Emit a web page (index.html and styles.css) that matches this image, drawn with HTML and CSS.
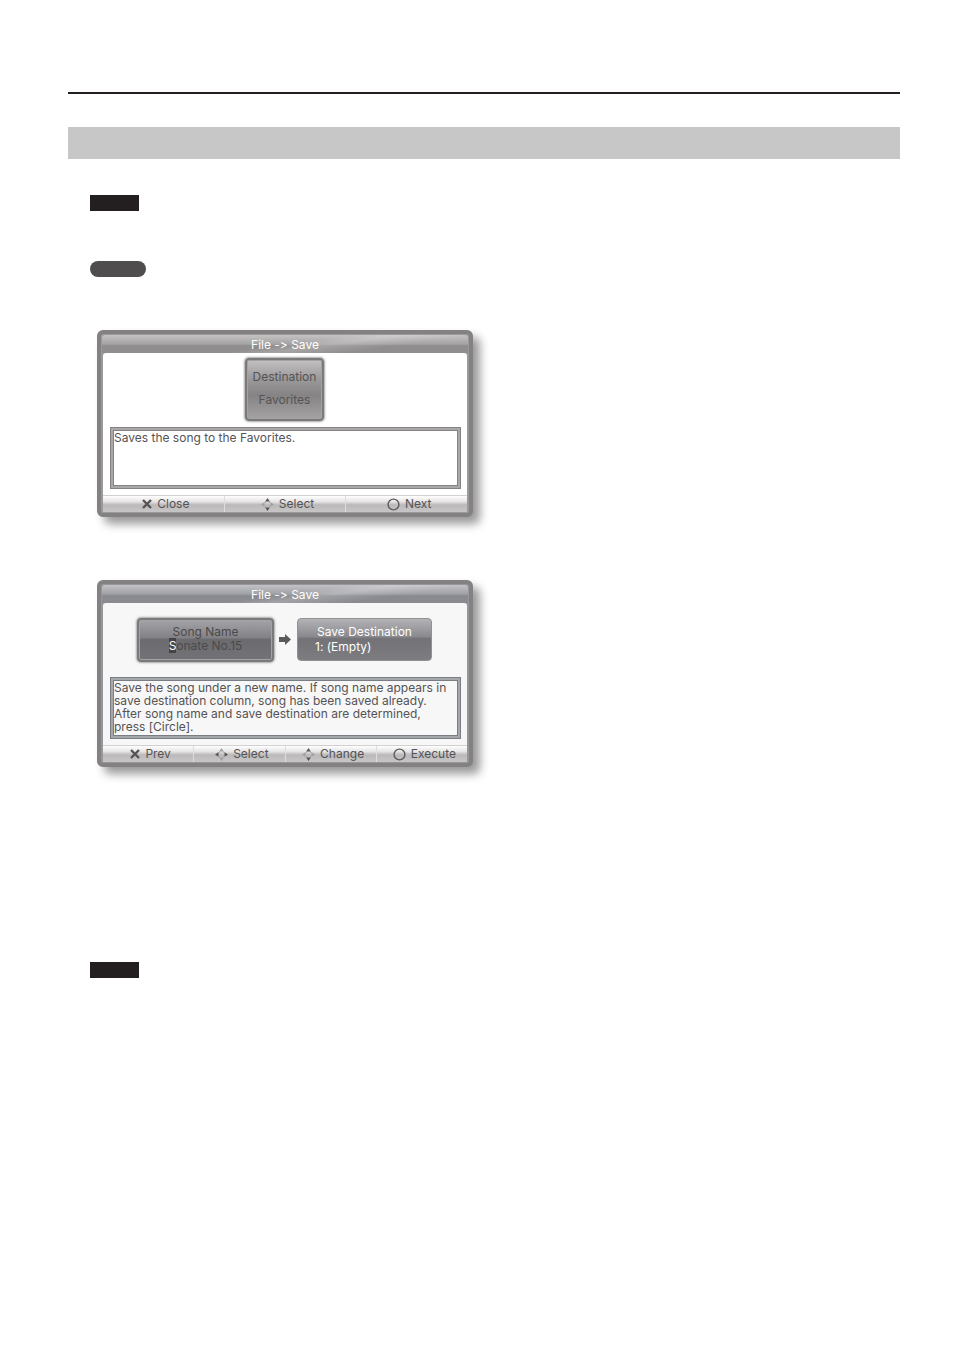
FILE: index.html
```
<!DOCTYPE html>
<html lang="en">
<head>
  <meta charset="UTF-8">
  <meta name="viewport" content="width=device-width, initial-scale=1">
  <title>File -&gt; Save</title>
  <link rel="stylesheet" href="styles.css">
</head>
<body>

  <!-- shared icons for the button bars -->
  <svg class="sprite" aria-hidden="true">
    <symbol id="cross" viewBox="0 0 10 10">
      <path d="M1 1L9 9M9 1L1 9" fill="none" stroke="#555354" stroke-width="2.4"/>
    </symbol>
    <symbol id="circle" viewBox="0 0 12 12">
      <circle cx="6" cy="6" r="5" fill="none" stroke="#5d5b5c" stroke-width="1.3"/>
    </symbol>
    <symbol id="vertical" viewBox="0 0 13 13">
      <path d="M0 6.5L3.5 4.2V8.8ZM13 6.5L9.5 4.2V8.8Z" fill="#a2a0a1"/>
      <path d="M4 5V4H5M8 4H9V5M9 8V9H8M5 9H4V8" fill="none" stroke="#a9a7a8"/>
      <path d="M6.5 0L8.8 3.5H4.2ZM6.5 13L8.8 9.5H4.2Z" fill="#555354"/>
    </symbol>
    <symbol id="horizontal" viewBox="0 0 13 13">
      <path d="M6.5 0L8.8 3.5H4.2ZM6.5 13L8.8 9.5H4.2Z" fill="#a2a0a1"/>
      <path d="M4 5V4H5M8 4H9V5M9 8V9H8M5 9H4V8" fill="none" stroke="#a9a7a8"/>
      <path d="M0 6.5L3.5 4.2V8.8ZM13 6.5L9.5 4.2V8.8Z" fill="#555354"/>
    </symbol>
  </svg>

  <header>
    <div class="title-band"></div>
  </header>

  <main>
    <div class="tag"></div>
    <div class="pill"></div>

    <section class="screen">
      <h2>File -&gt; Save</h2>
      <div class="content">
        <div class="choices">
          <button class="tile destination selected"><span>Destination</span><span>Favorites</span></button>
        </div>
        <p class="help">Saves the song to the Favorites.</p>
      </div>
      <div class="keys">
        <button><svg class="small"><use href="#cross"/></svg>Close</button>
        <button><svg><use href="#vertical"/></svg>Select</button>
        <button><svg><use href="#circle"/></svg>Next</button>
      </div>
    </section>

    <section class="screen cool">
      <h2>File -&gt; Save</h2>
      <div class="content">
        <div class="choices">
          <button class="tile song selected"><span>Song Name</span><span><mark>S</mark>onate No.15</span></button>
          <svg class="arrow" viewBox="0 0 12 11" aria-hidden="true">
            <path d="M0 3H6V0L12 5.5L6 11V8H0Z" fill="#5b595a"/>
          </svg>
          <button class="tile save"><span>Save Destination</span><span class="slot">1: (Empty)</span></button>
        </div>
        <p class="help">Save the song under a new name. If song name appears in<br>
          save destination column, song has been saved already.<br>
          After song name and save destination are determined,<br>
          press [Circle].</p>
      </div>
      <div class="keys">
        <button><svg class="small"><use href="#cross"/></svg>Prev</button>
        <button><svg><use href="#horizontal"/></svg>Select</button>
        <button><svg><use href="#vertical"/></svg>Change</button>
        <button><svg><use href="#circle"/></svg>Execute</button>
      </div>
    </section>

    <div class="tag last"></div>
  </main>

</body>
</html>
```
FILE: styles.css
```
* {
  box-sizing: border-box;
}

body {
  margin: 0;
  padding: 92px 54px 100px 68px;
  background: #fff;
  color: #555354;
  font: 12px/12px Inter, "Liberation Sans", sans-serif;
  font-variant-ligatures: none;
}

.sprite {
  position: absolute;
  width: 0;
  height: 0;
}

header {
  border-top: 2px solid #231f20;
  padding-top: 33px;
}

.title-band {
  height: 32px;
  background: #c7c7c7;
}

main {
  padding: 36px 22px 0;
}

.tag {
  width: 49px;
  height: 16px;
  background: #231f20;
}

.last {
  margin-top: 195px;
}

.pill {
  width: 56px;
  height: 16px;
  margin: 50px 0 53px;
  border-radius: 8px;
  background: #4f4d4e;
}

/* device screens */
.screen {
  max-width: 376px;
  margin: 0 0 63px 7px;
  padding: 1px;
  border: 4px solid #838182;
  border-radius: 6px;
  background: #9b999a;
  box-shadow: 7px 7px 10px rgba(0, 0, 0, 0.4);
}

.screen h2 {
  height: 18px;
  margin: 0;
  padding-top: 4px;
  border-radius: 3px 3px 0 0;
  background:
    linear-gradient(172deg, transparent 50%, rgba(255,255,255,0.2) 60%, transparent 75%),
    linear-gradient(#c5c3c4, #a5a3a4 50%, #8f8d8e 60%, #908e8f);
  color: #fff;
  font-size: 12px;
  font-weight: 400;
  text-align: center;
}

.content {
  height: 142px;
  margin: 0 1px;
  padding: 4px 6px 0 7px;
  border-radius: 3px 3px 0 0;
  background: #fff;
}

.choices {
  display: flex;
  justify-content: center;
  align-items: center;
  height: 65px;
  padding-right: 2px;
}

.help {
  height: 62px;
  margin: 5px 0 0;
  padding: 3px;
  border: 1px solid #858384;
  background: #fff;
  box-shadow: inset 0 0 0 2px #aaa8a9, inset 0 0 0 3px #858384;
  line-height: 13px;
  white-space: nowrap;
}

button {
  margin: 0;
  padding: 0;
  border: 0;
  background: none;
  color: inherit;
  font: inherit;
  cursor: pointer;
}

.tile {
  display: flex;
  flex-direction: column;
  justify-content: center;
  align-items: center;
  gap: 2px;
  padding-bottom: 1px;
  border: 1px solid #929092;
  border-radius: 4px;
}

.selected {
  border: 2px solid #7b797a;
  box-shadow: inset 0 0 0 1px #a4a2a3, 0 0 2px 1px #aaa8a9;
}

.destination {
  gap: 11px;
  width: 79px;
  height: 63px;
  padding-bottom: 2px;
  background: linear-gradient(#c2c0c1, #9b999a 32%, #858384 60%, #a5a3a4);
}

.song {
  width: 137px;
  height: 44px;
  background: linear-gradient(#a4a4a8, #828286 44%, #6b6b6f 49%, #737377);
  color: #4b494a;
}

.save {
  width: 135px;
  height: 43px;
  gap: 3px;
  padding-bottom: 0;
  background: linear-gradient(#b3b3b7, #8a8a8e 43%, #737377 48%, #7d7d81);
  color: #fff;
}

.slot {
  align-self: flex-start;
  padding-left: 17px;
}

mark {
  background: #454344;
  color: #fff;
}

.arrow {
  width: 12px;
  height: 11px;
  margin: 0 6px 0 5px;
}

.keys {
  display: flex;
  height: 17px;
  margin: 0 1px;
  border-top: 1px solid #d2d0d1;
}

.keys button {
  display: flex;
  flex: 1;
  justify-content: center;
  align-items: center;
  gap: 5px;
  padding: 0 0 0 5px;
  background: linear-gradient(#fff, #e6e4e5 35%, #bbb9ba 55%, #c7c5c6);
}

.keys button + button {
  border-left: 1px solid #dedcdd;
}

.keys svg {
  width: 13px;
  height: 13px;
}

.keys .small {
  width: 10px;
  height: 10px;
}

/* second screen has a bluish tint */
.cool {
  background: #96969c;
}

.cool h2 {
  background:
    linear-gradient(172deg, transparent 50%, rgba(255,255,255,0.2) 60%, transparent 75%),
    linear-gradient(#c2c2c6, #a0a1a6 50%, #888a90 60%, #8b8c91);
}

.cool .content,
.cool .help {
  background: #f7f7f7;
}

.cool .help {
  border-color: #7b7d85;
  box-shadow: inset 0 0 0 2px #a5a7ac, inset 0 0 0 3px #7b7d85;
}
```
